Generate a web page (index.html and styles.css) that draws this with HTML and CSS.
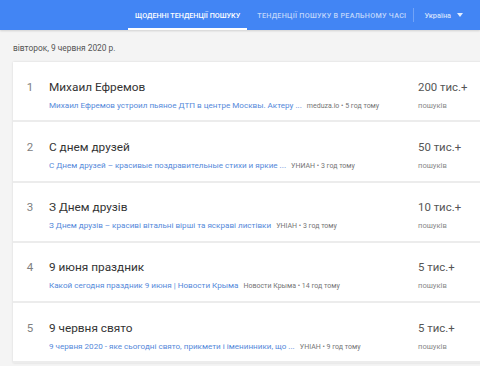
FILE: index.html
```html
<!DOCTYPE html>
<html lang="uk">
<head>
<meta charset="utf-8">
<link rel="stylesheet" href="styles.css">
</head>
<body>
<header class="topbar">
  <nav class="tabs">
    <a class="tab active">Щоденні тенденції пошуку</a>
    <a class="tab wide">Тенденції пошуку в реальному часі</a>
  </nav>
  <div class="divider"></div>
  <div class="geo">Україна <span class="caret"></span></div>
</header>
<main class="content">
  <div class="date">вівторок, 9 червня 2020 р.</div>
  <div class="card">
    <div class="row">
      <div class="idx">1</div>
      <div class="main">
        <div class="title">Михаил Ефремов</div>
        <div class="sub"><span class="link">Михаил Ефремов устроил пьяное ДТП в центре Москвы. Актеру ...</span><span class="src">meduza.io • 5 год тому</span></div>
      </div>
      <div class="count"><div class="num">200 тис.+</div><div class="lbl">пошуків</div></div>
    </div>
    <div class="row">
      <div class="idx">2</div>
      <div class="main">
        <div class="title">С днем друзей</div>
        <div class="sub"><span class="link">С Днем друзей – красивые поздравительные стихи и яркие ...</span><span class="src">УНИАН • 3 год тому</span></div>
      </div>
      <div class="count"><div class="num">50 тис.+</div><div class="lbl">пошуків</div></div>
    </div>
    <div class="row">
      <div class="idx">3</div>
      <div class="main">
        <div class="title">З Днем друзів</div>
        <div class="sub"><span class="link">З Днем друзів – красиві вітальні вірші та яскраві листівки</span><span class="src">УНІАН • 3 год тому</span></div>
      </div>
      <div class="count"><div class="num">10 тис.+</div><div class="lbl">пошуків</div></div>
    </div>
    <div class="row">
      <div class="idx">4</div>
      <div class="main">
        <div class="title">9 июня праздник</div>
        <div class="sub"><span class="link">Какой сегодня праздник 9 июня | Новости Крыма</span><span class="src">Новости Крыма • 14 год тому</span></div>
      </div>
      <div class="count"><div class="num">5 тис.+</div><div class="lbl">пошуків</div></div>
    </div>
    <div class="row">
      <div class="idx">5</div>
      <div class="main">
        <div class="title">9 червня свято</div>
        <div class="sub"><span class="link">9 червня 2020 - яке сьогодні свято, прикмети і іменинники, що ...</span><span class="src">УНІАН • 9 год тому</span></div>
      </div>
      <div class="count"><div class="num">5 тис.+</div><div class="lbl">пошуків</div></div>
    </div>
  </div>
</main>
</body>
</html>
```
FILE: styles.css
```css
* { box-sizing: border-box; }
html, body { margin: 0; padding: 0; }
body {
  width: 480px;
  height: 366px;
  overflow: hidden;
  background: #f4f4f4;
  font-family: Roboto, "Noto Sans", sans-serif;
  color: #333;
}
.topbar {
  height: 30px;
  background: #4285f4;
  display: flex;
  align-items: stretch;
  padding-left: 128px;
  box-shadow: 0 1px 2px rgba(0,0,0,0.15);
}
.tabs { display: flex; gap: 3px; }
.tab {
  display: flex;
  align-items: center;
  padding: 0 7px;
  font-size: 7.2px;
  font-weight: 500;
  text-transform: uppercase;
  color: rgba(255,255,255,0.68);
  border-bottom: 2px solid transparent;
  border-top: 2px solid transparent;
  white-space: nowrap;
}
.tab.wide { letter-spacing: 0.27px; }
.tab.active {
  color: #fff;
  border-bottom-color: #fff;
}
.divider {
  width: 1px;
  background: rgba(255,255,255,0.25);
  margin: 8px 0;
}
.geo {
  display: flex;
  align-items: center;
  padding-left: 10px;
  font-size: 7.4px;
  color: rgba(255,255,255,0.78);
  font-weight: 500;
}
.caret {
  display: inline-block;
  margin-left: 6px;
  width: 0; height: 0;
  border-left: 3.5px solid transparent;
  border-right: 3.5px solid transparent;
  border-top: 4px solid rgba(255,255,255,0.85);
}
.content { padding: 0 0 0 13px; }
.date {
  height: 32px;
  display: flex;
  align-items: center;
  font-size: 8.4px;
  color: #555;
  padding-top: 3px;
}
.card {
  width: 480px;
  background: #fff;
  box-shadow: 0 0 2px rgba(0,0,0,0.12);
}
.row {
  height: 60.3px;
  display: flex;
  align-items: flex-start;
  border-bottom: 2px solid #ececec;
  padding-top: 16.5px;
}
.idx {
  width: 36px;
  text-align: center;
  font-size: 11.5px;
  color: #808080;
  line-height: 17px;
  padding-right: 2px;
}
.main { flex: 0 0 369px; }
.title {
  font-size: 11.8px;
  line-height: 17px;
  color: #333;
}
.sub {
  margin-top: 4px;
  font-size: 8.1px;
  line-height: 11px;
  white-space: nowrap;
}
.link { color: #5589da; }
.src { color: #757575; margin-left: 5px; font-size: 7px; }
.num {
  font-size: 11.4px;
  line-height: 17px;
  color: #555;
}
.lbl {
  margin-top: 4px;
  font-size: 7.6px;
  line-height: 11px;
  color: #888;
}
```
